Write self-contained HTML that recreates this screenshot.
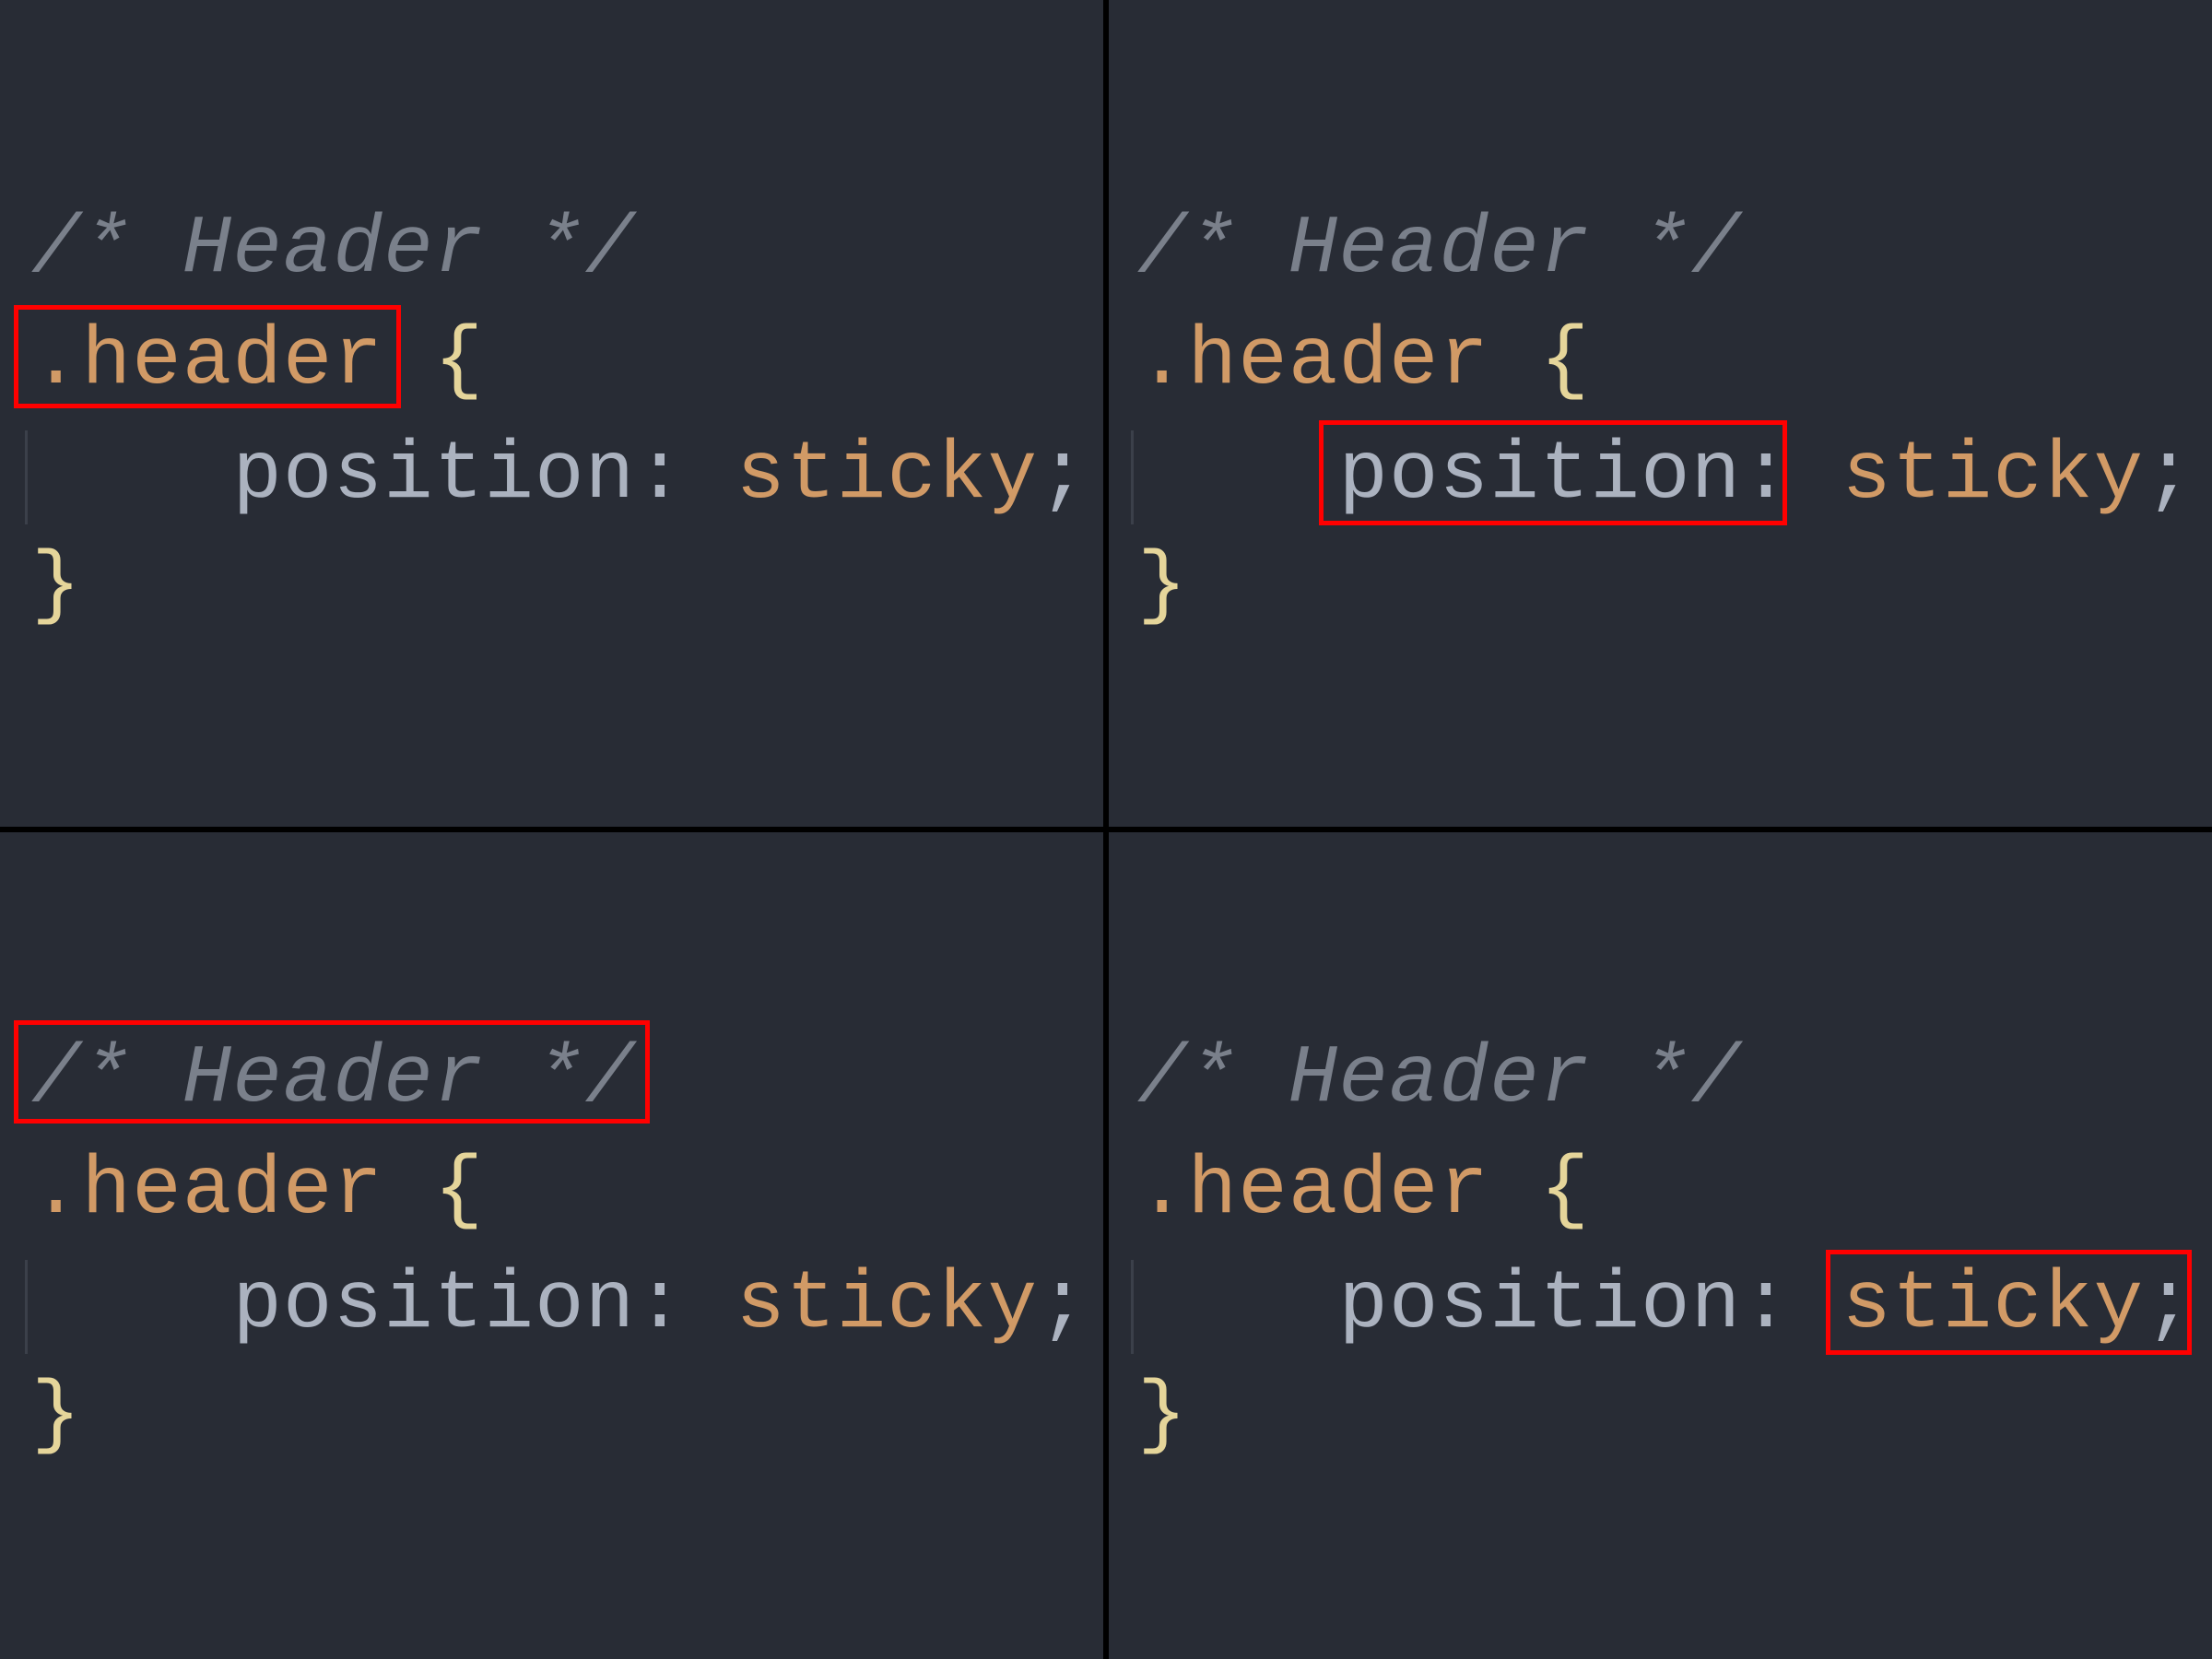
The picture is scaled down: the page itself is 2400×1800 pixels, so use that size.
<!DOCTYPE html>
<html><head><style>
html,body{margin:0;padding:0;width:2400px;height:1800px;overflow:hidden;background:#282c35}
.q{position:absolute;width:1200px;height:900px;overflow:hidden;background:#282c35}
.l{position:absolute;left:34px;white-space:pre;font-family:"Liberation Mono",monospace;font-size:89px;letter-spacing:1.2px;line-height:124px;color:#abb2bf}
.c{color:#7a808b;font-style:italic}
.o{color:#d19a66}
.b{color:#e5d59a}
.g{position:absolute;left:27px;top:467px;width:3px;height:102px;background:#3b404a}
.r{position:absolute;border:5px solid #ff0000;box-sizing:border-box}
.v{position:absolute;left:1197px;top:0;width:6px;height:1800px;background:#000}
.h{position:absolute;left:0;top:897px;width:2400px;height:6px;background:#000}
</style></head><body>
<div class="q" style="left:0;top:0">
<div class="l c" style="top:209px">/* Header */</div>
<div class="l" style="top:330px"><span class="o">.header</span> <span class="b">{</span></div>
<div class="g"></div>
<div class="l" style="top:454px">    position: <span class="o">sticky</span>;</div>
<div class="l b" style="top:574px">}</div>
</div>
<div class="q" style="left:1200px;top:0">
<div class="l c" style="top:209px">/* Header */</div>
<div class="l" style="top:330px"><span class="o">.header</span> <span class="b">{</span></div>
<div class="g"></div>
<div class="l" style="top:454px">    position: <span class="o">sticky</span>;</div>
<div class="l b" style="top:574px">}</div>
</div>
<div class="q" style="left:0;top:900px">
<div class="l c" style="top:209px">/* Header */</div>
<div class="l" style="top:330px"><span class="o">.header</span> <span class="b">{</span></div>
<div class="g"></div>
<div class="l" style="top:454px">    position: <span class="o">sticky</span>;</div>
<div class="l b" style="top:574px">}</div>
</div>
<div class="q" style="left:1200px;top:900px">
<div class="l c" style="top:209px">/* Header */</div>
<div class="l" style="top:330px"><span class="o">.header</span> <span class="b">{</span></div>
<div class="g"></div>
<div class="l" style="top:454px">    position: <span class="o">sticky</span>;</div>
<div class="l b" style="top:574px">}</div>
</div>
<div class="v"></div><div class="h"></div>
<div class="r" style="left:15px;top:331px;width:420px;height:112px"></div>
<div class="r" style="left:1431px;top:456px;width:508px;height:114px"></div>
<div class="r" style="left:15px;top:1107px;width:690px;height:112px"></div>
<div class="r" style="left:1981px;top:1356px;width:397px;height:114px"></div>
</body></html>
